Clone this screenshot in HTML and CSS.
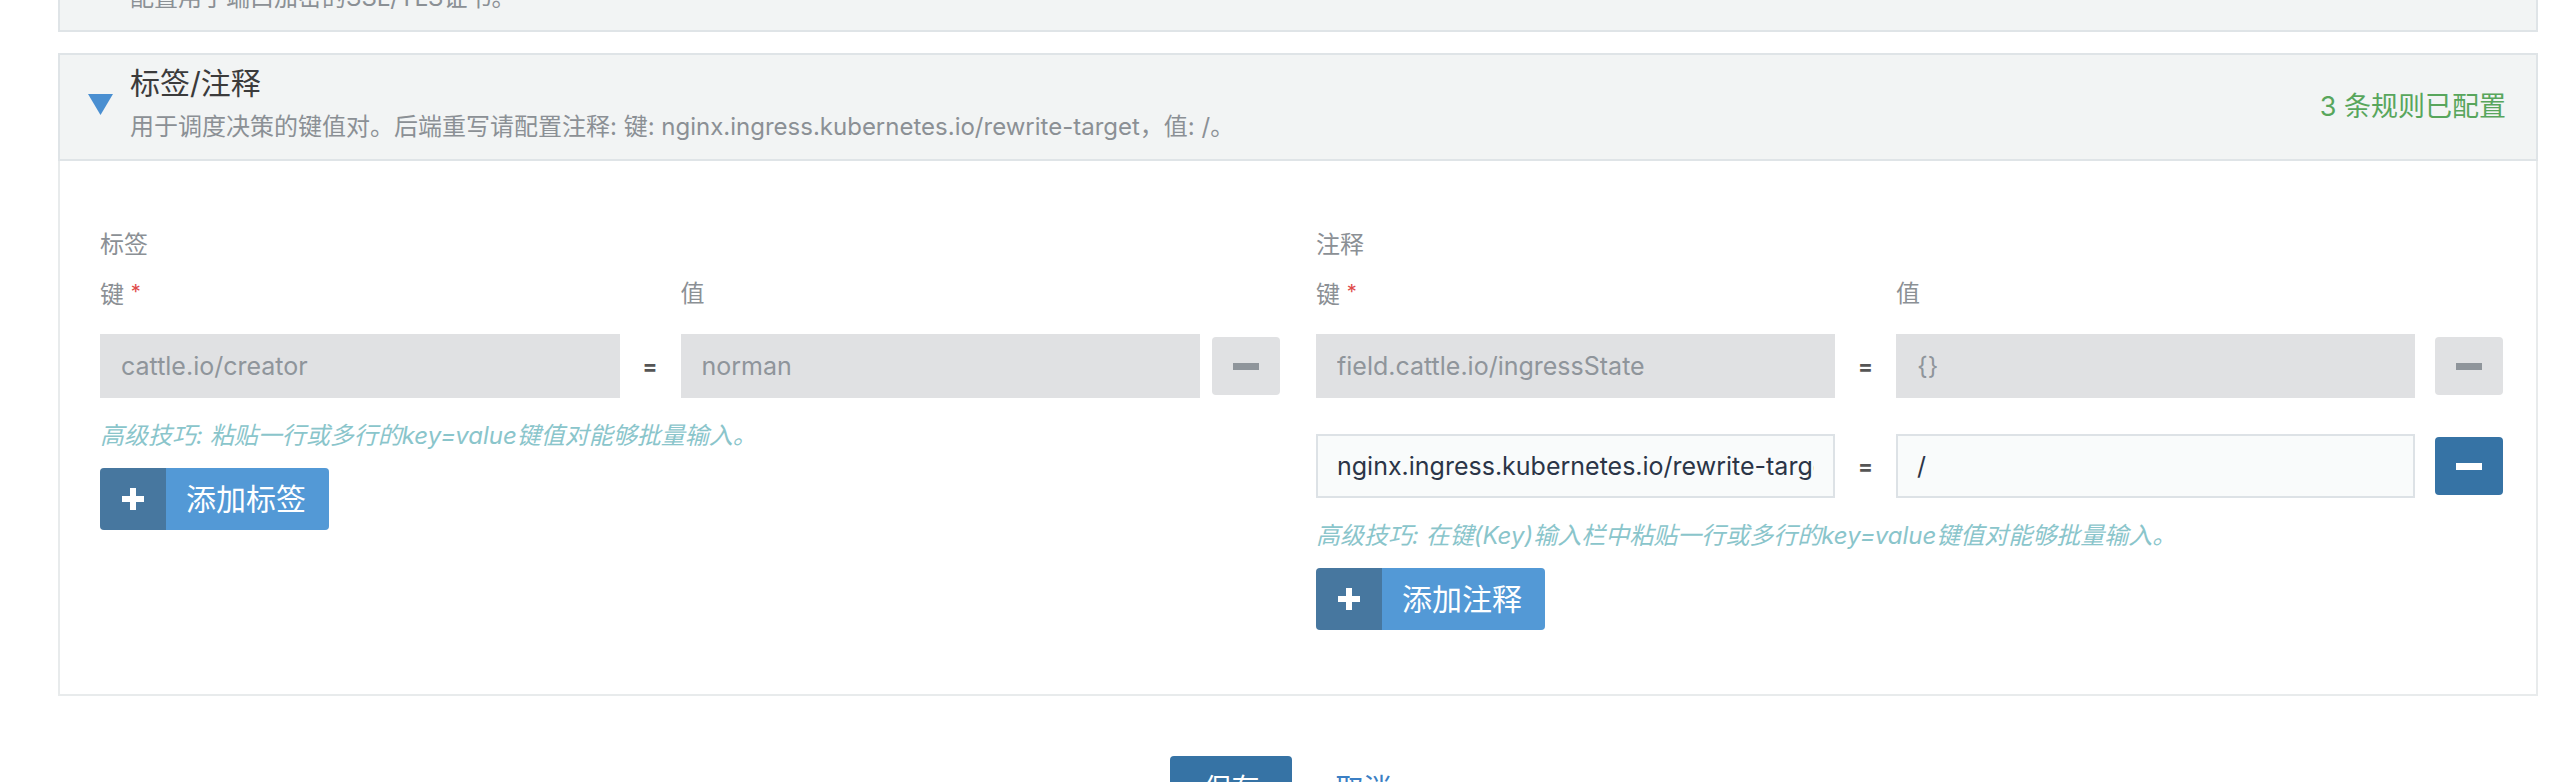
FILE: index.html
```html
<!DOCTYPE html>
<html lang="zh-CN">
<head>
    <meta charset="UTF-8">
    <meta name="viewport" content="width=device-width, initial-scale=1.0">
    <title>标签/注释</title>
    <link rel="stylesheet" href="styles.css">
</head>
<body>
    <div class="page">
        <!-- 上一个折叠的区块，只露出底部 -->
        <section class="panel panel-prev">
            <div class="panel-header">
                <svg class="caret" width="25" height="21" viewBox="0 0 25 21"><polygon points="2,0 23,10.5 2,21" fill="#4a8fd1"/></svg>
                <div class="panel-titles">
                    <h2>SSL/TLS证书</h2>
                    <p>配置用于端口加密的SSL/TLS证书。</p>
                </div>
            </div>
        </section>

        <section class="panel">
            <div class="panel-header">
                <svg class="caret" width="25" height="21" viewBox="0 0 25 21"><polygon points="0,0 25,0 12.5,21" fill="#4a8fd1"/></svg>
                <div class="panel-titles">
                    <h2>标签/注释</h2>
                    <p>用于调度决策的键值对。后端重写请配置注释: 键: nginx.ingress.kubernetes.io/rewrite-target，值: /。</p>
                </div>
                <div class="panel-status">3 条规则已配置</div>
            </div>

            <div class="panel-body">
                <div class="kv-columns">
                    <div class="kv-col">
                        <div class="section-label">标签</div>
                        <div class="kv-row kv-head">
                            <label>键 <span class="required">*</span></label>
                            <span></span>
                            <label>值</label>
                        </div>
                        <div class="kv-list">
                            <div class="kv-row">
                                <input class="kv-input" type="text" value="cattle.io/creator" disabled>
                                <span class="eq">=</span>
                                <input class="kv-input" type="text" value="norman" disabled>
                                <button class="btn-remove" disabled><span class="dash"></span></button>
                            </div>
                        </div>
                        <p class="hint">高级技巧: 粘贴一行或多行的key=value键值对能够批量输入。</p>
                        <button class="btn-add">
                            <span class="btn-add-icon"><svg width="22" height="22" viewBox="0 0 22 22"><rect x="8" y="0" width="6" height="22" fill="#fff"/><rect x="0" y="8" width="22" height="6" fill="#fff"/></svg></span>
                            <span class="btn-add-text">添加标签</span>
                        </button>
                    </div>

                    <div class="kv-col kv-col-wide">
                        <div class="section-label">注释</div>
                        <div class="kv-row kv-head">
                            <label>键 <span class="required">*</span></label>
                            <span></span>
                            <label>值</label>
                        </div>
                        <div class="kv-list">
                            <div class="kv-row">
                                <input class="kv-input" type="text" value="field.cattle.io/ingressState" disabled>
                                <span class="eq">=</span>
                                <input class="kv-input" type="text" value="{}" disabled>
                                <button class="btn-remove" disabled><span class="dash"></span></button>
                            </div>
                            <div class="kv-row">
                                <input class="kv-input" type="text" value="nginx.ingress.kubernetes.io/rewrite-target">
                                <span class="eq">=</span>
                                <input class="kv-input" type="text" value="/">
                                <button class="btn-remove"><span class="dash"></span></button>
                            </div>
                        </div>
                        <p class="hint">高级技巧: 在键(Key)输入栏中粘贴一行或多行的key=value键值对能够批量输入。</p>
                        <button class="btn-add">
                            <span class="btn-add-icon"><svg width="22" height="22" viewBox="0 0 22 22"><rect x="8" y="0" width="6" height="22" fill="#fff"/><rect x="0" y="8" width="22" height="6" fill="#fff"/></svg></span>
                            <span class="btn-add-text">添加注释</span>
                        </button>
                    </div>
                </div>
            </div>
        </section>

        <div class="footer-actions">
            <button class="btn-save">保存</button>
            <a class="link-cancel" href="#">取消</a>
        </div>
    </div>
</body>
</html>
```

FILE: styles.css
```css
html, body {
    overflow: hidden;
}
body {
    margin: 0;
    font-family: Inter, "Noto Sans CJK SC", sans-serif;
    background: #fff;
    color: #3d3d3d;
}
.page {
    width: 2480px;
    padding-left: 58px;
}
.panel + .panel {
    margin-top: 21px;
}
.panel-prev {
    margin-top: -76px;
}
.panel-header {
    display: flex;
    align-items: center;
    background: #f2f4f4;
    border: 2px solid #dfe4e7;
    padding: 10px 30px 15px 28px;
}
.caret {
    flex: none;
    margin-right: 17px;
}
.panel-titles {
    flex: 1;
}
.panel-titles h2 {
    margin: 0;
    font-size: 30px;
    line-height: 36px;
    font-weight: 400;
    color: #3b3b3b;
}
.panel-titles p {
    margin: 9px 0 0 0;
    font-size: 24px;
    line-height: 34px;
    color: #8b9095;
}
.panel-status {
    font-size: 27px;
    color: #58a65c;
}
.panel-body {
    border: 2px solid #e8ebec;
    border-top: none;
    padding: 67px 33px 64px 40px;
}
.kv-columns {
    display: grid;
    grid-template-columns: 1180px 1fr;
    gap: 36px;
    align-items: start;
}
.section-label {
    font-size: 24px;
    line-height: 34px;
    color: #8b9095;
    margin-bottom: 13px;
}
.kv-row {
    display: grid;
    grid-template-columns: 1fr 61px 1fr 80px;
    align-items: center;
}
.kv-col-wide .kv-row {
    grid-template-columns: 1fr 61px 1fr 88px;
}
.kv-head {
    margin-bottom: 22px;
}
.kv-head label {
    font-size: 24px;
    line-height: 34px;
    color: #8b9095;
}
.required {
    color: #e04b4b;
    font-size: 20px;
    vertical-align: 4px;
}
.kv-list {
    display: flex;
    flex-direction: column;
    gap: 36px;
}
.kv-input {
    box-sizing: border-box;
    width: 100%;
    height: 64px;
    padding: 0 19px;
    border: 2px solid #dde2e6;
    background: #f9fbfb;
    font-family: inherit;
    font-size: 25px;
    color: #2b3547;
    outline: none;
    border-radius: 0;
}
.kv-input:disabled {
    background: #e0e1e3;
    border-color: #e0e1e3;
    color: #8f959b;
    -webkit-text-fill-color: #8f959b;
}
.eq {
    text-align: center;
    font-size: 22px;
    font-weight: 700;
    color: #555;
}
.btn-remove {
    justify-self: end;
    width: 68px;
    height: 58px;
    border: none;
    border-radius: 4px;
    background: #3673a5;
    display: flex;
    align-items: center;
    justify-content: center;
    padding: 0;
}
.btn-remove .dash {
    width: 26px;
    height: 7px;
    background: #fff;
}
.btn-remove:disabled {
    background: #e0e1e3;
}
.btn-remove:disabled .dash {
    background: #8f959b;
}
.hint {
    margin: 21px 0 0 0;
    font-size: 24px;
    line-height: 34px;
    font-style: italic;
    color: #8ac5cb;
}
.btn-add {
    margin-top: 15px;
    display: inline-flex;
    height: 62px;
    padding: 0;
    border: none;
    border-radius: 4px;
    overflow: hidden;
    font-family: inherit;
}
.btn-add-icon {
    width: 66px;
    background: #47779f;
    display: flex;
    align-items: center;
    justify-content: center;
}
.btn-add-text {
    background: #5399d6;
    color: #fff;
    font-size: 30px;
    line-height: 62px;
    padding: 0 23px 0 20px;
}
.footer-actions {
    margin-top: 60px;
    display: flex;
    align-items: center;
    justify-content: center;
    gap: 43px;
    padding-right: 34px;
}
.btn-save {
    width: 122px;
    height: 62px;
    border: none;
    border-radius: 4px;
    background: #3673a5;
    color: #fff;
    font-family: inherit;
    font-size: 28px;
}
.link-cancel {
    font-size: 28px;
    color: #3b7fc4;
    text-decoration: none;
}
```
